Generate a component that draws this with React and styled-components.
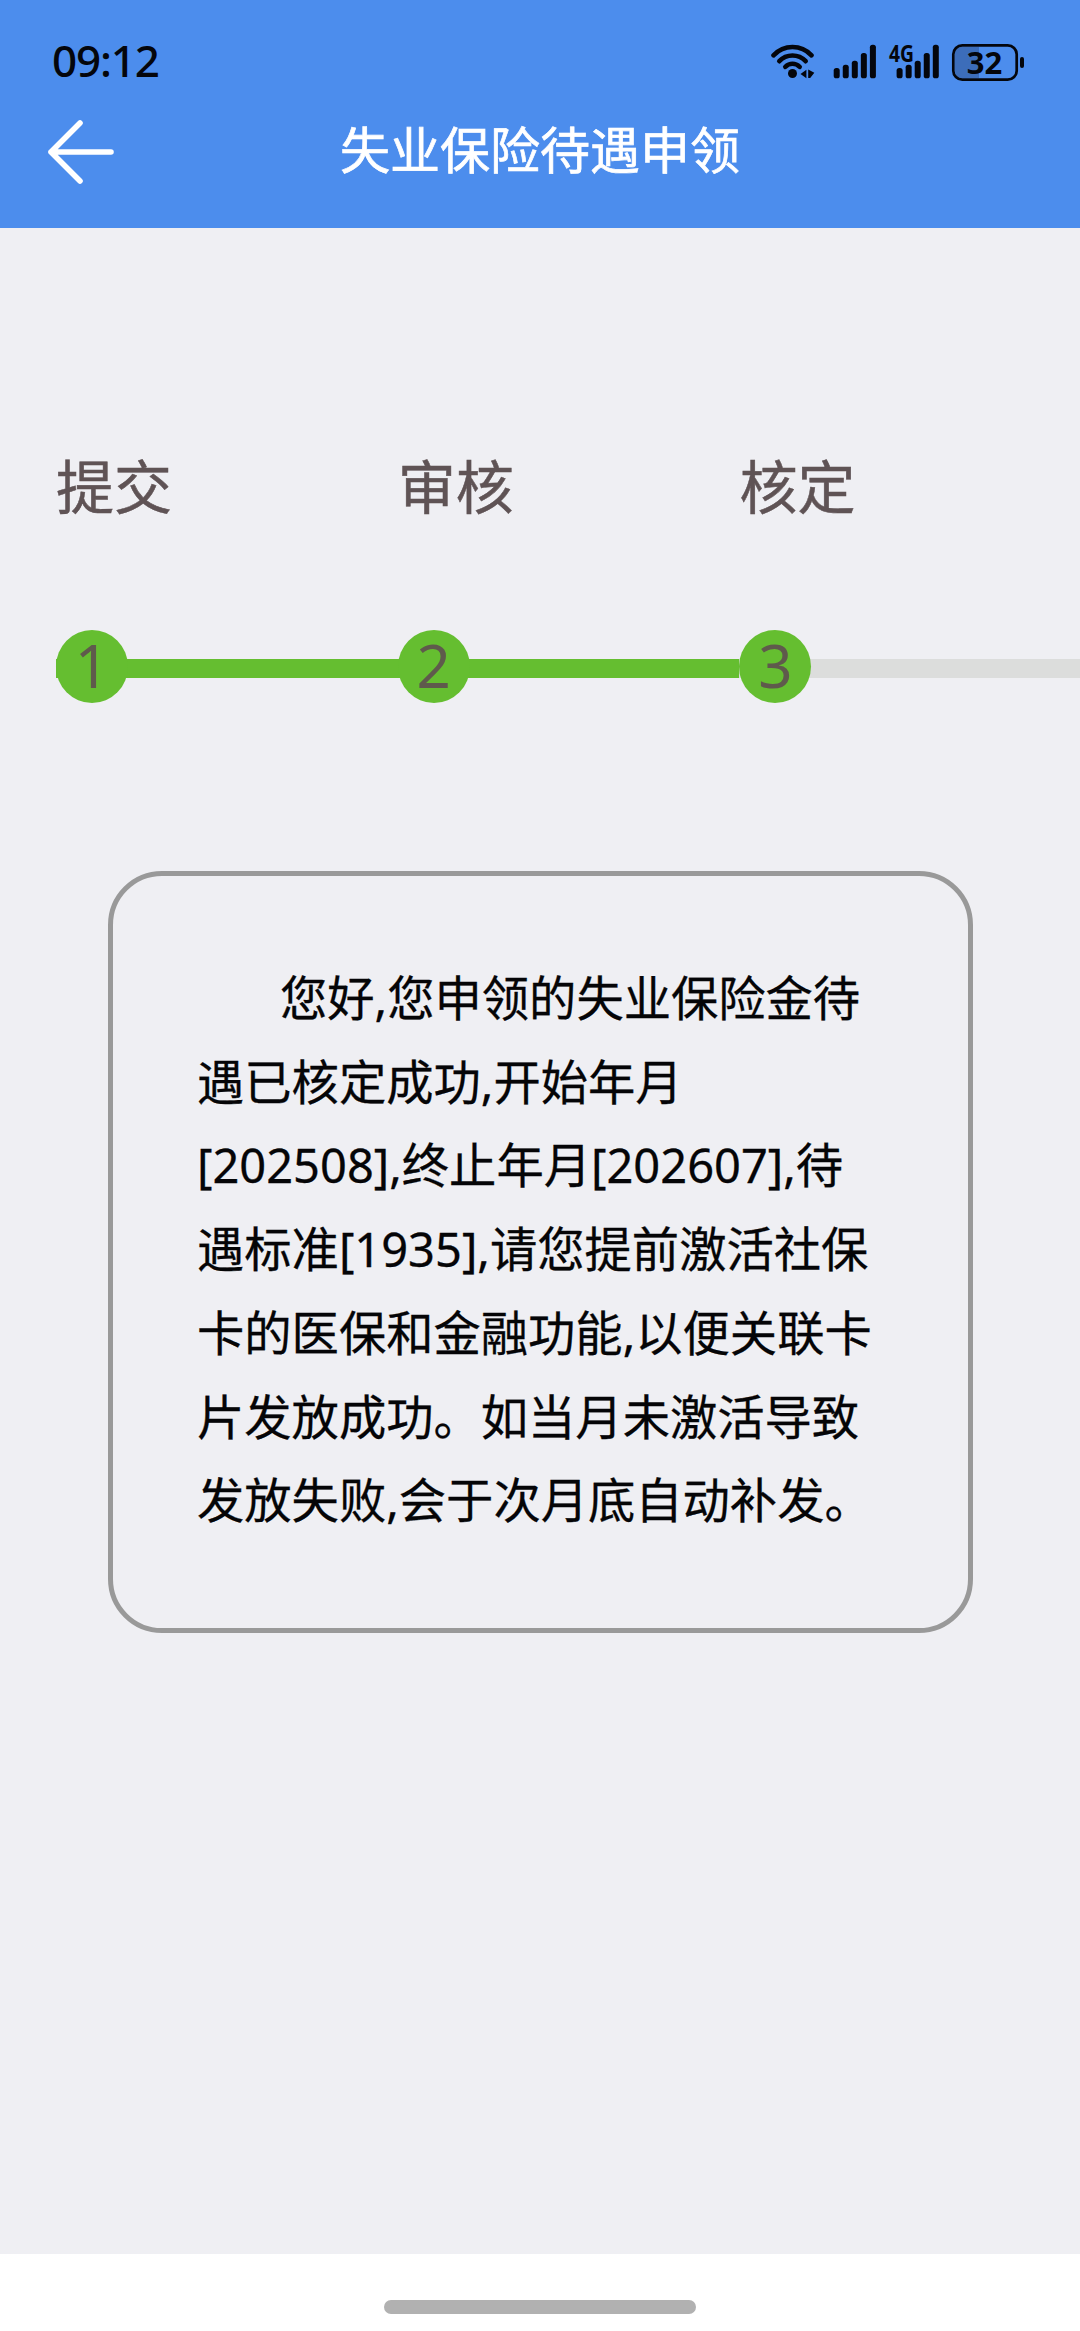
import React from 'react'
import styled, { createGlobalStyle } from 'styled-components'

const GlobalStyle = createGlobalStyle`
* {
  box-sizing: border-box;
}
body {
  margin: 0;
  background-color: #efeff3;
  font-family: "Noto Sans CJK SC", sans-serif;
}
`

const Tela = styled.div`
display: flex;
flex-direction: column;
width: 1080px;
height: 2331px;
overflow: hidden;
background-color: #efeff3;
`

const Header = styled.header`
display: flex;
flex-direction: column;
height: 228px;
background-color: #4c8ded;
`

const StatusBar = styled.div`
display: flex;
justify-content: space-between;
align-items: center;
height: 122px;
padding: 0 54px 0 52px;
`

const Clock = styled.span`
margin-top: -2px;
font-family: "Noto Sans", sans-serif;
font-size: 44px;
font-weight: 500;
line-height: 60px;
letter-spacing: -1.2px;
color: #04060c;
`

const StatusIcons = styled.svg`
display: block;
`

const TitleBar = styled.div`
display: grid;
grid-template-columns: 120px 1fr 120px;
align-items: start;
height: 62px;
`

const BackButton = styled.button`
display: flex;
padding: 0 0 0 46px;
margin-top: -3px;
border-style: none;
background-color: transparent;
`

const Title = styled.h1`
margin: -5px 0 0;
text-align: center;
font-size: 50px;
font-weight: 400;
line-height: 60px;
-webkit-text-stroke: 0.7px #fff;
color: #fff;
`

const Steps = styled.section`
display: flex;
height: 476px;
padding: 220px 0 0 56px;
`

const Step = styled.div`
display: flex;
flex: none;
flex-direction: column;
width: 341.7px;
`

const StepLabel = styled.span`
height: 182px;
font-size: 58px;
line-height: 72px;
-webkit-text-stroke: 0.5px #5f5355;
color: #5f5355;
`

const StepTrack = styled.div`
display: flex;
background: linear-gradient(${props => props.$done ? '#65be30, #65be30' : '#dcdddc, #dcdddc'}) 0 29px / 100% 19px no-repeat;
`

const StepNumber = styled.span`
display: flex;
justify-content: center;
width: 72px;
height: 73px;
border-radius: 50%;
background-color: #65be30;
font-family: "Noto Sans", sans-serif;
font-size: 60px;
line-height: 70px;
color: #5f5a4c;
`

const Card = styled.section`
width: 865px;
height: 762px;
margin: 167px 0 0 108px;
padding: 78px 0 0 84px;
border: 5px solid #999;
border-radius: 54px;
`

const Line = styled.p`
margin: 0;
padding-left: ${props => props.$indent ? '83px' : '0'};
font-size: 47.3px;
line-height: 83.7px;
white-space: nowrap;
-webkit-text-stroke: 0.3px #050507;
color: #050507;
`

const Latin = styled.span`
font-family: "Noto Sans", sans-serif;
font-size: 47px;
line-height: 1;
`

const BottomBar = styled.footer`
display: flex;
justify-content: center;
height: 77px;
margin-top: auto;
padding-top: 46px;
background-color: #fff;
`

const HomeHandle = styled.div`
width: 312px;
height: 14px;
border-radius: 7px;
background-color: #b1b1b1;
`

const steps = [
  { label: '提交', done: true },
  { label: '审核', done: true },
  { label: '核定', done: false },
]

const barTops = [24, 20.7, 16.7, 9, 0.7]

const SignalBars = ({ x }) => (
  <g fill="#04060c">
    {barTops.map((top, i) => (
      <rect key={top} x={x + i * 9.05} y={top} width="6" height={34.3 - top} rx="2.6" />
    ))}
  </g>
)

// wifi, two sim cards and battery
const Icons = () => (
  <StatusIcons width="255" height="68" viewBox="0 -17 255 68">
    <g fill="none" stroke="#04060c" strokeWidth="4.6" strokeLinecap="round">
      <path d="M2.5 11.3 C13 0.3 30 0.3 40.5 11.3" />
      <path d="M8.3 17.2 C15.5 9.6 27.5 9.6 34.7 17.2" />
      <path d="M14.3 22.8 C18.5 18.8 24.5 18.8 28.7 22.8" />
    </g>
    <circle cx="21.5" cy="29.5" r="4.5" fill="#04060c" />
    <path d="M29.5 30 L35.4 25.8 V34.2 Z M37.2 25.4 L43.3 28.8 L39.2 34 H37.2 Z" fill="#04060c" />
    <SignalBars x={62.7} />
    <text x="118" y="17.5" textLength="25" lengthAdjust="spacingAndGlyphs" fontFamily="Noto Sans, sans-serif" fontSize="23.5" fontWeight="700" fill="#04060c">4G</text>
    <SignalBars x={125.6} />
    <path d="M208 3 V34 H190 Q184 34 184 27 V10 Q184 3 190 3 Z" fill="#3c6dba" />
    <rect x="182.3" y="1.3" width="63.4" height="34.4" rx="9" fill="none" stroke="#04060c" strokeWidth="2.7" />
    <rect x="249" y="13" width="4" height="11" rx="2" fill="#04060c" />
    <text x="213.5" y="29.8" textAnchor="middle" fontFamily="Noto Sans, sans-serif" fontSize="31" fontWeight="700" fill="#04060c">32</text>
  </StatusIcons>
)

const BackArrow = () => (
  <svg width="70" height="66" viewBox="0 0 70 66" fill="none" stroke="#fff" strokeWidth="5.6" strokeLinecap="round" strokeLinejoin="round">
    <path d="M34 4 L5 33 L34 62 M5 33 H65" />
  </svg>
)

class App extends React.Component {

    render() {

        return (
            <Tela>
                <GlobalStyle />
                <Header>
                    <StatusBar>
                        <Clock>09:12</Clock>
                        <Icons />
                    </StatusBar>
                    <TitleBar>
                        <BackButton aria-label="返回"><BackArrow /></BackButton>
                        <Title>失业保险待遇申领</Title>
                    </TitleBar>
                </Header>
                <Steps>
                    {steps.map((step, index) => (
                        <Step key={step.label}>
                            <StepLabel>{step.label}</StepLabel>
                            <StepTrack $done={step.done}>
                                <StepNumber>{index + 1}</StepNumber>
                            </StepTrack>
                        </Step>
                    ))}
                </Steps>
                <Card>
                    <Line $indent>您好<Latin>,</Latin>您申领的失业保险金待</Line>
                    <Line>遇已核定成功<Latin>,</Latin>开始年月</Line>
                    <Line><Latin>[202508],</Latin>终止年月<Latin>[202607],</Latin>待</Line>
                    <Line>遇标准<Latin>[1935],</Latin>请您提前激活社保</Line>
                    <Line>卡的医保和金融功能<Latin>,</Latin>以便关联卡</Line>
                    <Line>片发放成功。如当月未激活导致</Line>
                    <Line>发放失败<Latin>,</Latin>会于次月底自动补发。</Line>
                </Card>
                <BottomBar>
                    <HomeHandle />
                </BottomBar>
            </Tela>
        )

    }
}

export default App
